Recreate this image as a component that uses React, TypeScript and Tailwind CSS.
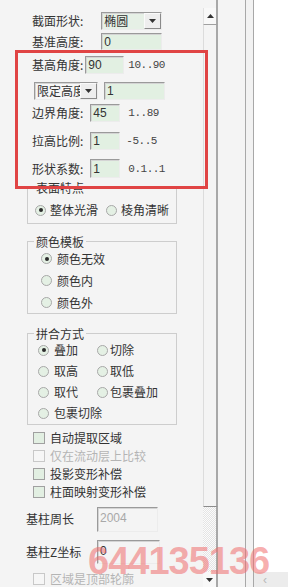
import React from "react";

const sunken =
  "border border-[#9a9a9a] border-r-[#ececec] border-b-[#ececec] shadow-[inset_1px_1px_0_#d4d4d4]";

function Field({ value, className = "", muted = false }: { value: string; className?: string; muted?: boolean }) {
  return (
    <div
      className={`flex items-center pl-[2px] font-['Liberation_Sans',sans-serif] text-[12px] ${sunken} ${
        muted ? "text-[#a8a8a8]" : "text-[#333]"
      } ${className}`}
    >
      {value}
    </div>
  );
}

function Arrow({ up = false }: { up?: boolean }) {
  return (
    <svg width="7" height="4" viewBox="0 0 7 4">
      <polygon points={up ? "3.5,0 7,4 0,4" : "0,0 7,0 3.5,4"} fill="#333" />
    </svg>
  );
}

function Select({ value, className = "" }: { value: string; className?: string }) {
  return (
    <div className={`flex h-[18px] ${sunken} ${className}`}>
      <span className="flex flex-1 items-center overflow-hidden whitespace-nowrap pl-[2px]">{value}</span>
      <span className="flex w-[17px] shrink-0 items-center justify-center border border-[#fafafa] border-r-[#8a8a8a] border-b-[#8a8a8a] bg-[#eeeeee]">
        <Arrow />
      </span>
    </div>
  );
}

function Radio({ on = false }: { on?: boolean }) {
  return (
    <span className="flex h-[11px] w-[11px] shrink-0 items-center justify-center rounded-full border border-[#a8a8a8] bg-[#e4f0e4]">
      {on && <span className="h-[4px] w-[4px] rounded-full bg-[#2b2b2b]" />}
    </span>
  );
}

function Check({ disabled = false }: { disabled?: boolean }) {
  return (
    <span
      className={`h-[12px] w-[12px] shrink-0 border border-[#a0a0a0] ${
        disabled ? "border-[#c8c8c8] bg-[#f6f6f6]" : "bg-[#e2efe2]"
      }`}
    />
  );
}

function Range({ text, className = "" }: { text: string; className?: string }) {
  return (
    <span className={`font-['Liberation_Mono',monospace] text-[11px] tracking-[-0.5px] text-[#444] ${className}`}>
      {text}
    </span>
  );
}

function Group({ title, className = "", children }: { title: string; className?: string; children: React.ReactNode }) {
  return (
    <fieldset className={`ml-[27px] w-[150px] border border-[#cdcdcd] ${className}`}>
      <legend className="ml-[6px] px-[2px] leading-[12px]">{title}</legend>
      {children}
    </fieldset>
  );
}

function Row({ label, className = "", children }: { label: string; className?: string; children?: React.ReactNode }) {
  return (
    <div className={`flex items-center ${className}`}>
      <span className="ml-[32px]">{label}</span>
      {children}
    </div>
  );
}

export default function App() {
  return (
    <div className="relative flex h-[587px] w-[288px] overflow-hidden bg-white font-['Noto_Sans_CJK_SC',sans-serif] text-[12px] leading-[12px] text-[#333]">
      {/* form column */}
      <div className="flex h-full w-[203px] shrink-0 flex-col bg-[#f4f4f4]">
        <Row label="截面形状:" className="mt-[12px] h-[18px]">
          <Select value="椭圆" className="ml-[18px] w-[61px] bg-[#e6f0e6]" />
        </Row>
        <Row label="基准高度:" className="mt-[3px] h-[17px]">
          <Field value="0" className="ml-[18px] h-[17px] w-[61px] bg-[#e2f0e2]" />
        </Row>
        <Row label="基高角度:" className="mt-[6px] h-[18px]">
          <Field value="90" className="ml-[2px] h-[18px] w-[39px] bg-[#e2f0e2]" />
          <Range text="10..90" className="ml-[4px]" />
        </Row>
        <div className="mt-[8px] flex h-[18px] items-center">
          <Select value="限定高度" className="ml-[34px] w-[64px] bg-[#f6f6f6]" />
          <Field value="1" className="ml-[6px] h-[18px] w-[61px] bg-[#e2f0e2]" />
        </div>
        <Row label="边界角度:" className="mt-[4px] h-[18px]">
          <Field value="45" className="ml-[7px] h-[18px] w-[30px] bg-[#e2f0e2]" />
          <Range text="1..89" className="ml-[8px]" />
        </Row>
        <Row label="拉高比例:" className="mt-[10px] h-[18px]">
          <Field value="1" className="ml-[7px] h-[18px] w-[30px] bg-[#e2f0e2]" />
          <Range text="-5..5" className="ml-[6px]" />
        </Row>
        <Row label="形状系数:" className="mt-[9px] h-[19px]">
          <Field value="1" className="ml-[7px] h-[19px] w-[30px] bg-[#e2f0e2]" />
          <Range text="0.1..1" className="ml-[8px]" />
        </Row>

        <Group title="表面特点" className="mt-[4px] h-[46px]">
          <div className="mt-[10px] flex items-center whitespace-nowrap">
            <span className="ml-[7px]"><Radio on /></span>
            <span className="ml-[4px]">整体光滑</span>
            <span className="ml-[8px]"><Radio /></span>
            <span className="ml-[4px]">棱角清晰</span>
          </div>
        </Group>

        <Group title="颜色模板" className="mt-[12px] h-[78px]">
          {["颜色无效", "颜色内", "颜色外"].map((t, i) => (
            <div key={t} className="flex h-[22px] items-center">
              <span className="ml-[13px]"><Radio on={i === 0} /></span>
              <span className="ml-[5px]">{t}</span>
            </div>
          ))}
        </Group>

        <Group title="拼合方式" className="mt-[14px] h-[101px]">
          {[
            ["叠加", "切除"],
            ["取高", "取低"],
            ["取代", "包裹叠加"],
            ["包裹切除", ""],
          ].map(([a, b], i) => (
            <div key={a} className="flex h-[21px] items-center whitespace-nowrap">
              <span className="ml-[10px]"><Radio on={i === 0} /></span>
              <span className="ml-[5px] w-[43px]">{a}</span>
              {b && (
                <>
                  <Radio />
                  <span className="ml-[2px]">{b}</span>
                </>
              )}
            </div>
          ))}
        </Group>

        <div className="mt-[4px] flex flex-col">
          {[
            ["自动提取区域", false],
            ["仅在流动层上比较", true],
            ["投影变形补偿", false],
            ["柱面映射变形补偿", false],
          ].map(([t, d]) => (
            <div key={t as string} className="flex h-[18px] items-center whitespace-nowrap pl-[33px]">
              <Check disabled={d as boolean} />
              <span className={`ml-[5px] ${d ? "text-[#b4b4b4]" : ""}`}>{t as string}</span>
            </div>
          ))}
        </div>

        <div className="mt-[6px] flex h-[25px] items-center">
          <span className="ml-[26px] w-[71px]">基柱周长</span>
          <Field value="2004" muted className="h-[25px] w-[61px] items-start pt-[4px] text-[11px]" />
        </div>
        <div className="mt-[8px] flex h-[24px] items-center">
          <span className="ml-[26px] w-[71px]">基柱Z坐标</span>
          <Field value="0" className="h-[24px] w-[63px] items-start pt-[4px]" />
        </div>
        <div className="mt-[7px] flex h-[18px] items-center whitespace-nowrap pl-[33px]">
          <Check disabled />
          <span className="ml-[5px] text-[#b4b4b4]">区域是顶部轮廓</span>
        </div>
      </div>

      {/* vertical scrollbar */}
      <div className="flex h-full w-[15px] shrink-0 flex-col bg-[#f4f4f4]">
        <div className="h-[8px] border-r-2 border-[#a8a8a8]" />
        <div className="flex h-[17px] items-center justify-center border-l border-[#e2e2e2] border-r-2 border-r-[#a8a8a8] border-b border-b-[#a0a0a0] bg-[#f8f8f8]">
          <Arrow up />
        </div>
        <div className="h-[482px] border-l border-[#dcdcdc] border-r-2 border-r-[#a8a8a8] border-b border-b-[#8c8c8c] bg-[#f4f4f4]" />
        <div className="flex-1 border-r-2 border-[#a8a8a8] bg-[repeating-conic-gradient(#e4e4e4_0_25%,#fbfbfb_0_50%)] bg-[length:2px_2px]" />
        <div className="flex h-[15px] items-center justify-center border-r-2 border-[#a8a8a8] bg-[#f8f8f8]">
          <Arrow />
        </div>
      </div>

      <div className="h-full w-[27px] shrink-0 bg-[#f4f4f4]" />
      <div className="h-full w-[9px] shrink-0 border-x border-[#a8a8a8] bg-[#f2f2f2]" />

      {/* right pane */}
      <div className="flex h-full flex-1 flex-col justify-end bg-white">
        <div className="flex h-[15px] items-center bg-[#ececec] pl-[9px] font-['Liberation_Sans',sans-serif] text-[12px] text-[#b8b8b8]">
          ‹
        </div>
      </div>

      {/* annotation frame */}
      <div className="pointer-events-none absolute left-[15px] top-[50px] h-[139px] w-[193px] border-[3px] border-[#e04444]" />

      {/* watermark */}
      <div className="pointer-events-none absolute left-[88px] top-[542px] font-['Liberation_Sans',sans-serif] text-[38px] font-bold leading-[38px] tracking-[-1px] text-[#f06a6a]/55">
        644135136
      </div>
    </div>
  );
}
